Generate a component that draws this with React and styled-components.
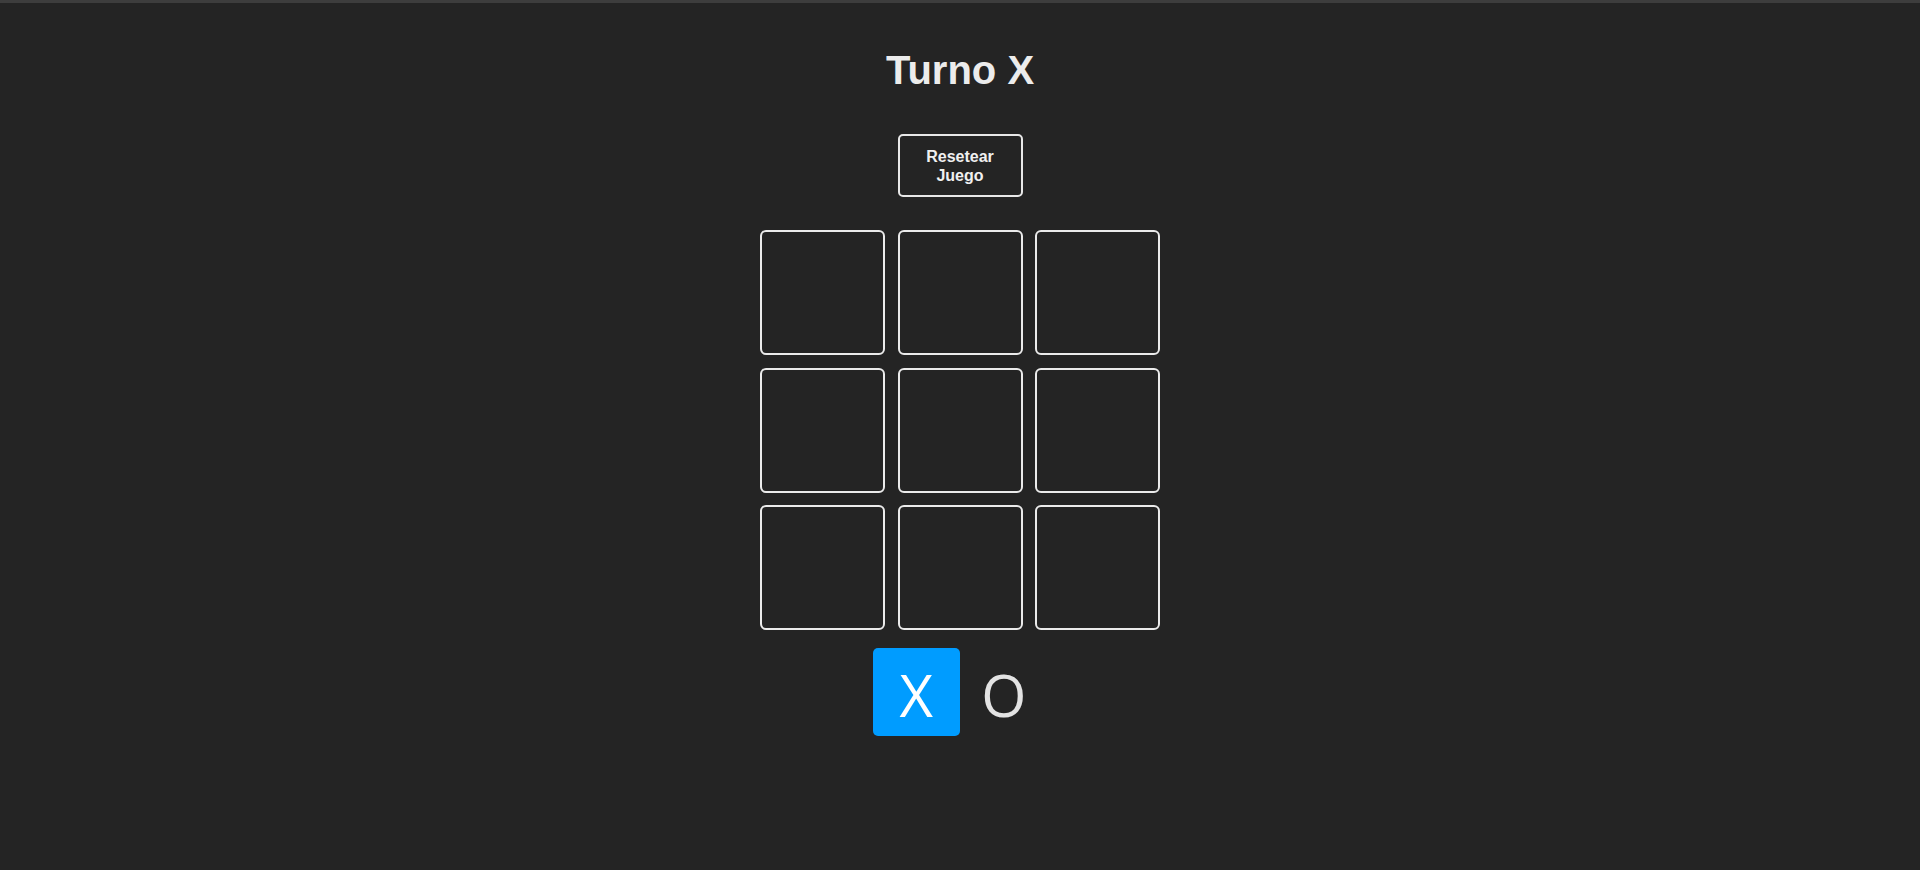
import React, { useState } from "react";
import styled, { createGlobalStyle } from "styled-components";

const Global = createGlobalStyle`
  html, body { margin: 0; padding: 0; background: #242424; }
  body { border-top: 3px solid #3d3d3d; box-sizing: border-box; min-height: 870px; }
  * { box-sizing: border-box; }
`;

const Main = styled.main`
  display: flex;
  flex-direction: column;
  align-items: center;
  padding-top: 45px;
  color: #e6e6e6;
  font-family: "Liberation Sans", Arial, sans-serif;
`;

const Title = styled.h1`
  margin: 0;
  font-size: 40px;
  line-height: 44px;
  font-weight: 700;
  color: #ececec;
`;

const ResetButton = styled.button`
  margin-top: 42px;
  width: 125px;
  height: 63px;
  padding: 0 16px;
  border: 2px solid #e8e8e8;
  border-radius: 5px;
  background: transparent;
  color: #f0f0f0;
  font-family: "Liberation Sans", Arial, sans-serif;
  font-weight: 700;
  font-size: 16px;
  line-height: 19px;
  cursor: pointer;
`;

const Board = styled.section`
  margin-top: 33px;
  display: grid;
  grid-template-columns: repeat(3, 125px);
  grid-auto-rows: 125px;
  gap: 12.5px;
`;

const Cell = styled.div`
  border: 2px solid #ebebeb;
  border-radius: 6px;
  display: flex;
  align-items: center;
  justify-content: center;
  font-family: "Open Sans", Inter, sans-serif;
  font-size: 58px;
  cursor: pointer;
`;

const Turn = styled.section`
  margin-top: 18px;
  display: flex;
`;

const TurnSquare = styled.div`
  width: 87.5px;
  height: 87.5px;
  border-radius: 5px;
  display: flex;
  align-items: center;
  justify-content: center;
  font-family: "Open Sans", Inter, sans-serif;
  font-size: 58px;
  line-height: 1;
  padding-top: 6px;
  color: ${(p) => (p.$selected ? "#ffffff" : "#e3e3e3")};
  background: ${(p) => (p.$selected ? "#009cff" : "transparent")};
`;

export default function App() {
  const [board, setBoard] = useState(Array(9).fill(null));
  const [turn, setTurn] = useState("X");

  const play = (i) => {
    if (board[i]) return;
    const next = [...board];
    next[i] = turn;
    setBoard(next);
    setTurn(turn === "X" ? "O" : "X");
  };

  const reset = () => {
    setBoard(Array(9).fill(null));
    setTurn("X");
  };

  return (
    <>
      <Global />
      <Main>
        <Title>Turno {turn}</Title>
        <ResetButton onClick={reset}>Resetear Juego</ResetButton>
        <Board>
          {board.map((v, i) => (
            <Cell key={i} onClick={() => play(i)}>
              {v}
            </Cell>
          ))}
        </Board>
        <Turn>
          <TurnSquare $selected={turn === "X"}>X</TurnSquare>
          <TurnSquare $selected={turn === "O"}>O</TurnSquare>
        </Turn>
      </Main>
    </>
  );
}
